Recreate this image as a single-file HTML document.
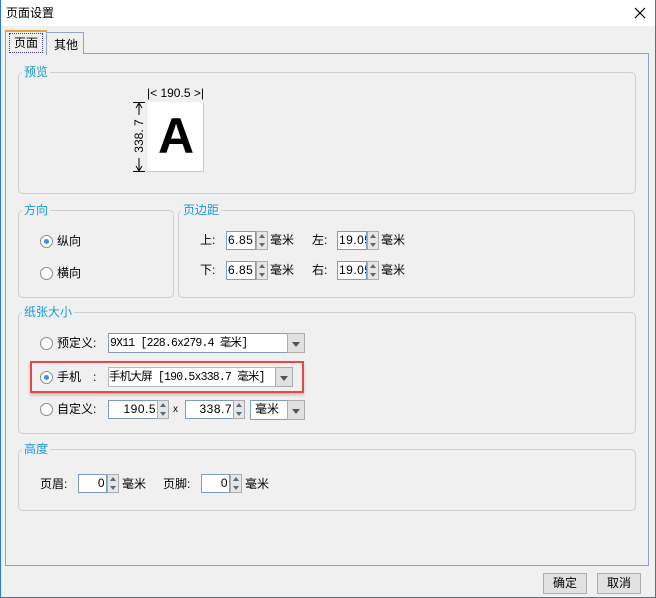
<!DOCTYPE html>
<html><head><meta charset="utf-8"><style>
*{margin:0;padding:0;box-sizing:border-box}
body{width:656px;height:598px;background:#f0f0f0;font-family:"Liberation Sans","Noto Sans CJK SC",sans-serif;font-size:12px;color:#000;position:relative;overflow:hidden}
.a{position:absolute}
.win{left:0;top:0;width:656px;height:598px;border:1px solid #2b79d0;border-top:none}
.title{left:0;top:0;width:656px;height:26px;background:#fff}
.grp{position:absolute;border:1px solid #cfcfcf;border-radius:5px}
.lbl{position:absolute;color:#1a9ad6;background:#f0f0f0;padding:0 2px;font-size:12px;line-height:14px}
.radio{position:absolute;width:13px;height:13px;border:1px solid #8a8a8a;border-radius:50%;background:#fff}
.radio.on::after{content:"";position:absolute;left:3px;top:3px;width:5px;height:5px;border-radius:50%;background:#3b8ff0}
.inp{position:absolute;height:19px;border:1px solid #7f9db9;background:#fff;text-align:right;line-height:17px;padding-right:1px;overflow:hidden;white-space:nowrap;font-family:"Liberation Sans","Noto Sans CJK SC",sans-serif;letter-spacing:0.5px}
.inp.l{text-align:left;padding-left:1px}
.inp.c{font-family:"Liberation Mono","Noto Sans CJK SC",monospace;font-size:11.5px;letter-spacing:-0.8px;line-height:19px}
.spin{position:absolute;width:12px;height:19px;background:#e6e6e6;border:1px solid #acacac}
.spin::before{content:"";position:absolute;left:2px;top:2px;border-left:3px solid transparent;border-right:3px solid transparent;border-bottom:4px solid #5a6a80}
.spin::after{content:"";position:absolute;left:2px;bottom:2px;border-left:3px solid transparent;border-right:3px solid transparent;border-top:4px solid #5a6a80}
.dd{position:absolute;width:18px;background:#e1e1e1;border:1px solid #acacac}
.dd::after{content:"";position:absolute;left:4px;top:8px;border-left:4px solid transparent;border-right:4px solid transparent;border-top:5px solid #555}
.t{position:absolute;line-height:14px;white-space:nowrap}
.btn{position:absolute;width:44px;height:21px;border:1px solid #adadad;background:#e1e1e1;text-align:center;line-height:19px}
</style></head><body>
<div class="a title"></div>
<div class="t" style="left:6px;top:6px;font-size:12px">页面设置</div>
<svg class="a" style="left:634px;top:7px" width="12" height="12"><path d="M1 1L11 11M11 1L1 11" stroke="#000" stroke-width="1.2"/></svg>
<div class="a win"></div>

<div class="a" style="left:5px;top:53px;width:644px;height:513px;border:1px solid #8ea5c4;background:#f0f0f0"></div>
<div class="a" style="left:46px;top:32px;width:38px;height:22px;border:1px solid #8ea5c4;border-bottom:none;background:#f0f0f0"></div>
<div class="t" style="left:54px;top:38px">其他</div>
<div class="a" style="left:5px;top:30px;width:42px;height:25px;border:1px solid #8ea5c4;border-top:2px solid #e8a33a;border-bottom:none;background:#f0f0f0"></div>
<div class="a" style="left:9px;top:33px;width:34px;height:20px;border:1px dotted #3a3aa0"></div>
<div class="t" style="left:14px;top:36px">页面</div>

<div class="grp" style="left:18px;top:72px;width:618px;height:122px"></div>
<div class="lbl" style="left:22px;top:65px">预览</div>
<div class="a" style="left:148px;top:102px;width:56px;height:70px;background:#fff;border-right:1px solid #ccc;border-bottom:1px solid #ccc"></div>
<div class="t" style="left:158px;top:108px;font-size:50px;line-height:56px;font-weight:bold">A</div>
<div class="t" style="left:147px;top:86px;font-size:12px">|&lt; 190.5 &gt;|</div>
<svg class="a" style="left:132px;top:101px" width="14" height="72"><path d="M1 1.5H13M1 70.5H13M7 2V14M7 2L4 7M7 2L10 7M7 70V57M7 70L4 65M7 70L10 65" stroke="#000" stroke-width="1" fill="none"/></svg>
<div class="t" style="left:114px;top:129px;transform:rotate(-90deg);font-size:12px;width:50px;text-align:center">338. 7</div>

<div class="grp" style="left:18px;top:210px;width:156px;height:88px"></div>
<div class="lbl" style="left:22px;top:203px">方向</div>
<div class="radio on" style="left:40px;top:235px"></div>
<div class="t" style="left:57px;top:234px">纵向</div>
<div class="radio" style="left:40px;top:267px"></div>
<div class="t" style="left:57px;top:266px">横向</div>

<div class="grp" style="left:178px;top:210px;width:457px;height:88px"></div>
<div class="lbl" style="left:181px;top:203px">页边距</div>
<div class="t" style="left:200px;top:233px">上:</div>
<div class="inp l" style="left:226px;top:231px;width:30px">6.85</div>
<div class="spin" style="left:256px;top:231px"></div>
<div class="t" style="left:270px;top:233px">毫米</div>
<div class="t" style="left:312px;top:233px">左:</div>
<div class="inp l" style="left:337px;top:231px;width:30px">19.05</div>
<div class="spin" style="left:367px;top:231px"></div>
<div class="t" style="left:381px;top:233px">毫米</div>
<div class="t" style="left:200px;top:263px">下:</div>
<div class="inp l" style="left:226px;top:261px;width:30px">6.85</div>
<div class="spin" style="left:256px;top:261px"></div>
<div class="t" style="left:270px;top:263px">毫米</div>
<div class="t" style="left:312px;top:263px">右:</div>
<div class="inp l" style="left:337px;top:261px;width:30px">19.05</div>
<div class="spin" style="left:367px;top:261px"></div>
<div class="t" style="left:381px;top:263px">毫米</div>

<div class="grp" style="left:18px;top:312px;width:618px;height:122px"></div>
<div class="lbl" style="left:22px;top:305px">纸张大小</div>
<div class="radio" style="left:40px;top:337px"></div>
<div class="t" style="left:57px;top:336px">预定义:</div>
<div class="inp l c" style="left:108px;top:333px;width:180px;height:20px">9X11 [228.6x279.4 毫米]</div>
<div class="dd" style="left:287px;top:333px;height:20px"></div>

<div class="a" style="left:30px;top:361px;width:274px;height:32px;border:2px solid #e8474a;box-shadow:0 2px 3px rgba(0,0,0,.2)"></div>
<div class="radio on" style="left:40px;top:371px"></div>
<div class="t" style="left:57px;top:370px">手机　:</div>
<div class="inp l c" style="left:108px;top:367px;width:168px;height:20px;border-color:#bbb;padding-left:0">手机大屏 [190.5x338.7 毫米]</div>
<div class="dd" style="left:275px;top:367px;height:20px"></div>

<div class="radio" style="left:40px;top:403px"></div>
<div class="t" style="left:57px;top:402px">自定义:</div>
<div class="inp" style="left:108px;top:400px;width:50px">190.5</div>
<div class="spin" style="left:157px;top:400px"></div>
<div class="t" style="left:173px;top:403px;font-size:10px">x</div>
<div class="inp" style="left:185px;top:400px;width:49px">338.7</div>
<div class="spin" style="left:233px;top:400px"></div>
<div class="inp l" style="left:250px;top:400px;width:38px;height:20px;padding-left:4px;letter-spacing:0">毫米</div>
<div class="dd" style="left:287px;top:400px;height:20px"></div>

<div class="grp" style="left:18px;top:449px;width:618px;height:62px"></div>
<div class="lbl" style="left:22px;top:442px">高度</div>
<div class="t" style="left:40px;top:477px">页眉:</div>
<div class="inp" style="left:78px;top:474px;width:29px">0</div>
<div class="spin" style="left:107px;top:474px"></div>
<div class="t" style="left:122px;top:477px">毫米</div>
<div class="t" style="left:163px;top:477px">页脚:</div>
<div class="inp" style="left:201px;top:474px;width:29px">0</div>
<div class="spin" style="left:230px;top:474px"></div>
<div class="t" style="left:245px;top:477px">毫米</div>

<div class="btn" style="left:543px;top:573px">确定</div>
<div class="btn" style="left:597px;top:573px">取消</div>
</body></html>
